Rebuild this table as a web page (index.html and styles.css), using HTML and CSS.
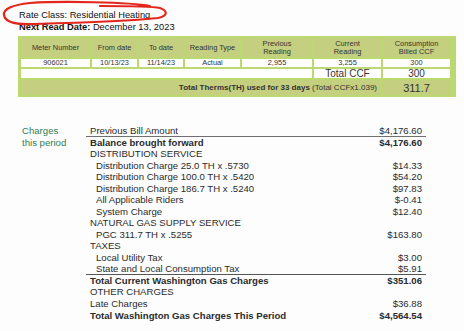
FILE: index.html
```html
<!DOCTYPE html>
<html>
<head>
<meta charset="utf-8">
<link rel="stylesheet" href="styles.css">
</head>
<body>
<div class="page">
  <div class="head">
    <div class="line1">Rate Class: Residential Heating</div>
    <div class="line2"><b>Next Read Date:</b> December 13, 2023</div>
    <svg class="oval" width="175" height="32" viewBox="0 0 175 32">
      <path d="M150 6 C130 2 60 1 30 3 C12 5 3 9 4 15 C5 22 14 25 34 24 C70 23 130 21 158 18 C168 16 168 11 160 8 C150 6 120 6 100 6" fill="none" stroke="#e3261c" stroke-width="2.2" stroke-linecap="round"/>
    </svg>
  </div>

  <div class="meter">
    <div class="c hd">Meter Number</div>
    <div class="c hd">From date</div>
    <div class="c hd">To date</div>
    <div class="c hd">Reading Type</div>
    <div class="c hd">Previous<br>Reading</div>
    <div class="c hd">Current<br>Reading</div>
    <div class="c hd">Consumption<br>Billed CCF</div>

    <div class="c wt">906021</div>
    <div class="c wt">10/13/23</div>
    <div class="c wt">11/14/23</div>
    <div class="c wt">Actual</div>
    <div class="c wt">2,955</div>
    <div class="c wt">3,255</div>
    <div class="c wt">300</div>

    <div class="c wt span5"></div>
    <div class="c wt big">Total CCF</div>
    <div class="c wt big">300</div>

    <div class="c hd span6 therms"><b>Total Therms(TH) used for 33 days</b> (Total CCFx1.039)</div>
    <div class="c hd total">311.7</div>
  </div>

  <div class="charges">
    <div class="label">Charges<br>this period</div>
    <div class="list">
      <div class="row rule"><span>Previous Bill Amount</span><span>$4,176.60</span></div>
      <div class="row bold"><span>Balance brought forward</span><span>$4,176.60</span></div>
      <div class="row"><span>DISTRIBUTION SERVICE</span><span></span></div>
      <div class="row ind"><span>Distribution Charge 25.0 TH x .5730</span><span>$14.33</span></div>
      <div class="row ind"><span>Distribution Charge 100.0 TH x .5420</span><span>$54.20</span></div>
      <div class="row ind"><span>Distribution Charge 186.7 TH x .5240</span><span>$97.83</span></div>
      <div class="row ind"><span>All Applicable Riders</span><span>$-0.41</span></div>
      <div class="row ind"><span>System Charge</span><span>$12.40</span></div>
      <div class="row"><span>NATURAL GAS SUPPLY SERVICE</span><span></span></div>
      <div class="row ind"><span>PGC 311.7 TH x .5255</span><span>$163.80</span></div>
      <div class="row"><span>TAXES</span><span></span></div>
      <div class="row ind"><span>Local Utility Tax</span><span>$3.00</span></div>
      <div class="row ind rule2"><span>State and Local Consumption Tax</span><span>$5.91</span></div>
      <div class="row bold"><span>Total Current Washington Gas Charges</span><span>$351.06</span></div>
      <div class="row"><span>OTHER CHARGES</span><span></span></div>
      <div class="row"><span>Late Charges</span><span>$36.88</span></div>
      <div class="row bold last"><span>Total Washington Gas Charges This Period</span><span>$4,564.54</span></div>
    </div>
  </div>
</div>
</body>
</html>
```

FILE: styles.css
```css
* { box-sizing: border-box; }
html, body { margin: 0; padding: 0; background: #fdfdfd; }
body {
  font-family: "Liberation Sans", Arial, sans-serif;
  color: #2b2b2b;
  width: 464px;
  height: 331px;
  overflow: hidden;
}
.page { padding: 9px 0 0 0; }
.head {
  position: relative;
  padding-left: 19px;
  font-size: 9.3px;
  line-height: 12px;
  color: #111;
}
.head b { font-weight: bold; }
.oval {
  position: absolute;
  left: 0;
  top: -9px;
}
.meter {
  margin: 3px 0 0 18px;
  width: 438px;
  background: #bcd871;
  padding: 2px 3px 2px 3px;
  display: grid;
  grid-template-columns: 69px 45px 44px 55px 70px 67px 67px;
  grid-template-rows: 19px 8px 9px 15px;
  column-gap: 2px;
  row-gap: 2px;
}
.c {
  display: flex;
  align-items: center;
  justify-content: center;
  text-align: center;
  font-size: 7.4px;
  line-height: 8px;
  color: #333;
}
.hd { background: #c5cf80; }
.wt { background: #ffffff; }
.span5 { grid-column: span 5; }
.span6 { grid-column: span 6; }
.big { font-size: 10px; }
.therms {
  justify-content: flex-end;
  padding-right: 4px;
  font-size: 8px;
  white-space: pre;
}
.total { font-size: 11px; }
.charges {
  display: flex;
  margin-top: 28px;
}
.label {
  width: 86px;
  padding-left: 22px;
  font-size: 9.6px;
  line-height: 11.5px;
  color: #2e7d55;
}
.list { width: 340px; }
.row {
  display: flex;
  justify-content: space-between;
  padding: 0 4px;
  font-size: 9.6px;
  line-height: 11.5px;
  height: 11.5px;
  color: #2b2b2b;
}
.row.ind span:first-child { padding-left: 6px; }
.row.bold { font-weight: bold; }
.row.rule { border-bottom: 1.5px solid #707070; }
.row.rule2 { border-bottom: 1.5px solid #555; }
.row.last { margin-top: 1px; }
```
